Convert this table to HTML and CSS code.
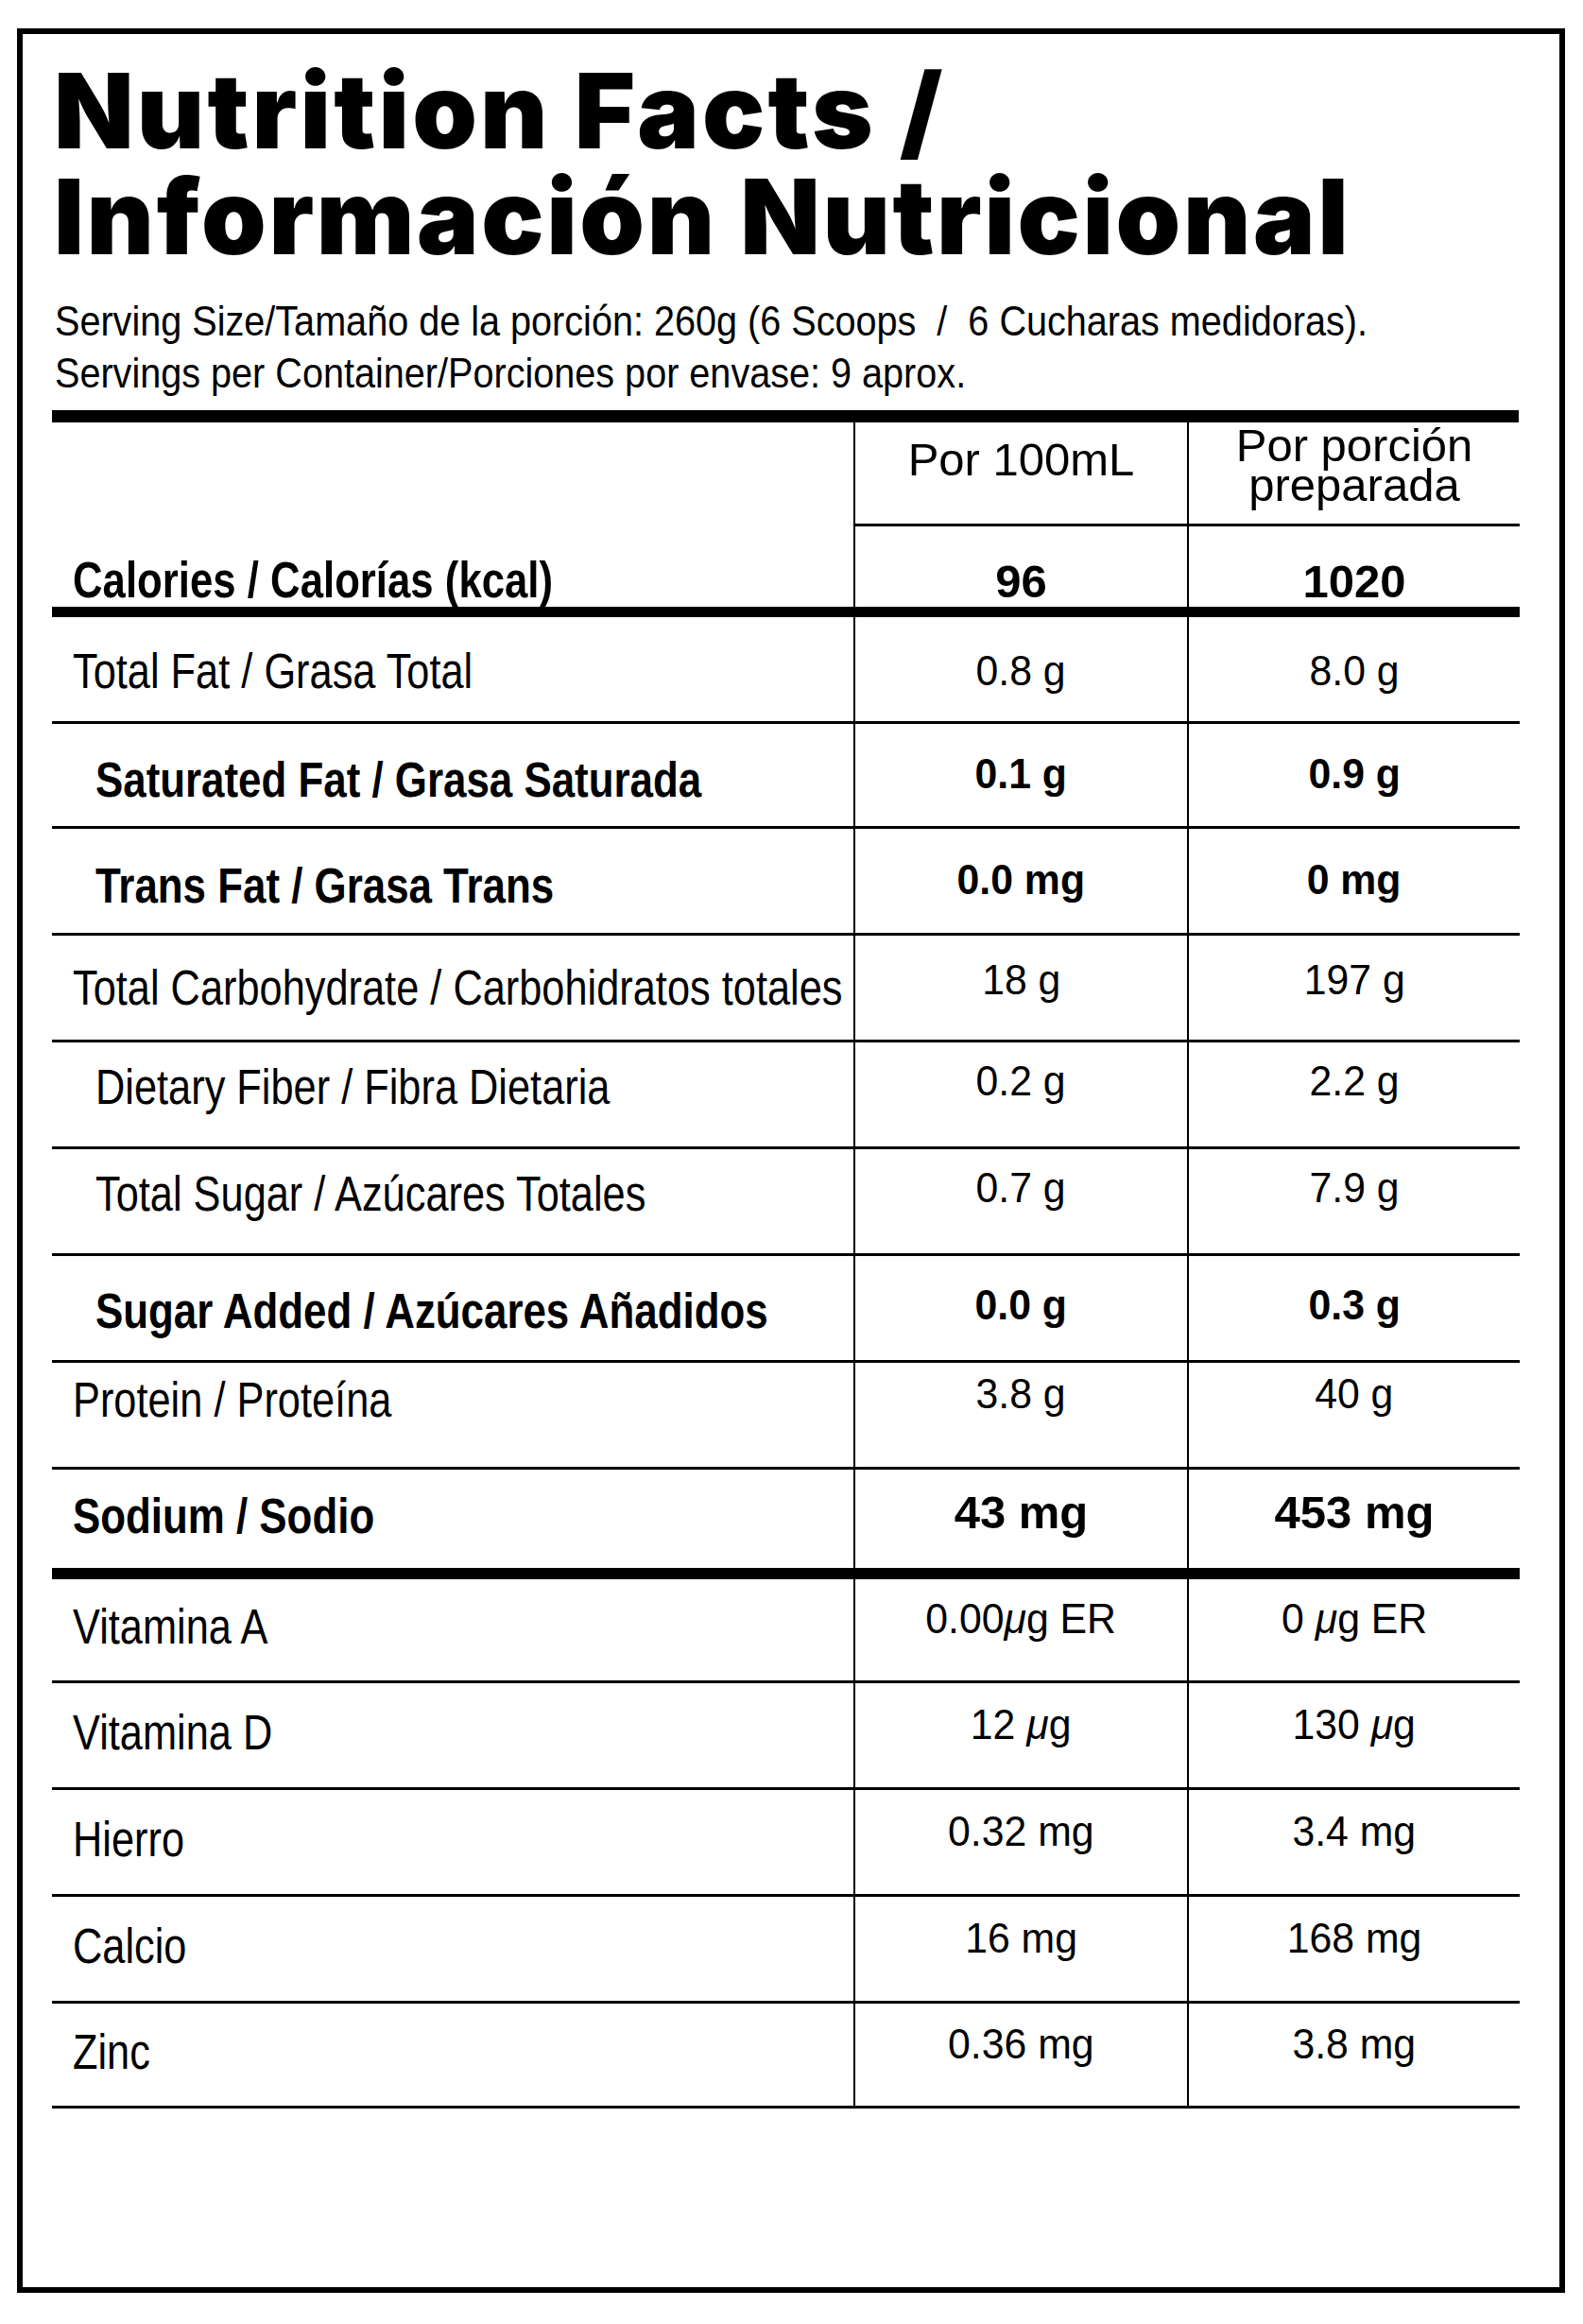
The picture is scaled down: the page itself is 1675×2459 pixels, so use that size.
FILE: index.html
```html
<!DOCTYPE html>
<html lang="es">
<head>
<meta charset="utf-8">
<title>Nutrition Facts / Información Nutricional</title>
<link rel="stylesheet" href="styles.css">
</head>
<body>
<div class="label">
  <h1 class="title"><span>Nutrition Facts /</span><span>Información Nutricional</span></h1>
  <div class="serving">
    <p>Serving Size/Tamaño de la porción: 260g (6 Scoops &nbsp;/ &nbsp;6 Cucharas medidoras).</p>
    <p>Servings per Container/Porciones por envase: 9 aprox.</p>
  </div>
  <div class="bar"></div>
  <div class="table">
    <div class="row head">
      <div class="cell"></div>
      <div class="cell v h1"><span class="hd">Por 100mL</span></div>
      <div class="cell v h2"><span class="hd two">Por porción<br>preparada</span></div>
    </div>
    <div class="row cal">
      <div class="cell"><span class="lbl b cl">Calories / Calorías (kcal)</span></div>
      <div class="cell v"><span class="val b cv">96</span></div>
      <div class="cell v"><span class="val b cv">1020</span></div>
    </div>
    <div class="row r-fat">
      <div class="cell"><span class="lbl">Total Fat / Grasa Total</span></div>
      <div class="cell v"><span class="val">0.8 g</span></div>
      <div class="cell v"><span class="val">8.0 g</span></div>
    </div>
    <div class="row short r-sat">
      <div class="cell ind"><span class="lbl b">Saturated Fat / Grasa Saturada</span></div>
      <div class="cell v"><span class="val b">0.1 g</span></div>
      <div class="cell v"><span class="val b">0.9 g</span></div>
    </div>
    <div class="row r-sat">
      <div class="cell ind"><span class="lbl b">Trans Fat / Grasa Trans</span></div>
      <div class="cell v"><span class="val b">0.0 mg</span></div>
      <div class="cell v"><span class="val b">0 mg</span></div>
    </div>
    <div class="row r-carb">
      <div class="cell"><span class="lbl">Total Carbohydrate / Carbohidratos totales</span></div>
      <div class="cell v"><span class="val">18 g</span></div>
      <div class="cell v"><span class="val">197 g</span></div>
    </div>
    <div class="row r-fib">
      <div class="cell ind"><span class="lbl">Dietary Fiber / Fibra Dietaria</span></div>
      <div class="cell v"><span class="val">0.2 g</span></div>
      <div class="cell v"><span class="val">2.2 g</span></div>
    </div>
    <div class="row r-fib">
      <div class="cell ind"><span class="lbl">Total Sugar / Azúcares Totales</span></div>
      <div class="cell v"><span class="val">0.7 g</span></div>
      <div class="cell v"><span class="val">7.9 g</span></div>
    </div>
    <div class="row r-add">
      <div class="cell ind"><span class="lbl b">Sugar Added / Azúcares Añadidos</span></div>
      <div class="cell v"><span class="val b">0.0 g</span></div>
      <div class="cell v"><span class="val b">0.3 g</span></div>
    </div>
    <div class="row r-prot">
      <div class="cell"><span class="lbl">Protein / Proteína</span></div>
      <div class="cell v"><span class="val">3.8 g</span></div>
      <div class="cell v"><span class="val">40 g</span></div>
    </div>
    <div class="row sod">
      <div class="cell"><span class="lbl b">Sodium / Sodio</span></div>
      <div class="cell v"><span class="val b cv">43 mg</span></div>
      <div class="cell v"><span class="val b cv">453 mg</span></div>
    </div>
    <div class="row vita r-vit">
      <div class="cell"><span class="lbl">Vitamina A</span></div>
      <div class="cell v"><span class="val">0.00<i class="mu">μ</i>g ER</span></div>
      <div class="cell v"><span class="val">0 <i class="mu">μ</i>g ER</span></div>
    </div>
    <div class="row r-vit">
      <div class="cell"><span class="lbl">Vitamina D</span></div>
      <div class="cell v"><span class="val">12 <i class="mu">μ</i>g</span></div>
      <div class="cell v"><span class="val">130 <i class="mu">μ</i>g</span></div>
    </div>
    <div class="row r-vit">
      <div class="cell"><span class="lbl">Hierro</span></div>
      <div class="cell v"><span class="val">0.32 mg</span></div>
      <div class="cell v"><span class="val">3.4 mg</span></div>
    </div>
    <div class="row r-vit">
      <div class="cell"><span class="lbl">Calcio</span></div>
      <div class="cell v"><span class="val">16 mg</span></div>
      <div class="cell v"><span class="val">168 mg</span></div>
    </div>
    <div class="row short r-vit">
      <div class="cell"><span class="lbl">Zinc</span></div>
      <div class="cell v"><span class="val">0.36 mg</span></div>
      <div class="cell v"><span class="val">3.8 mg</span></div>
    </div>
  </div>
</div>
</body>
</html>
```
FILE: styles.css
```css
* { box-sizing: border-box; margin: 0; padding: 0; }

body {
  background: #fff;
  color: #000;
  padding: 30px 0 0 18px;
  font-family: "Liberation Sans", Arial, sans-serif;
}

.label {
  width: 1638px;
  height: 2396px;
  border: 6px solid #000;
}

.title {
  font-family: Inter, "Liberation Sans", sans-serif;
  font-weight: 900;
  font-size: 110px;
  line-height: 112px;
  letter-spacing: 2.6px;
  padding: 25px 0 0 33px;
}
.title span { display: block; white-space: nowrap; }
.title span:first-child { letter-spacing: 3.2px; }

.serving {
  margin-top: 27px;
  padding-left: 34px;
  font-size: 44px;
  line-height: 55px;
}
.serving p {
  white-space: nowrap;
  transform: scaleX(0.9);
  transform-origin: left center;
}

.bar {
  margin: 12px 0 0 31px;
  width: 1552px;
  height: 13px;
  background: #000;
}

.table {
  margin-left: 31px;
  width: 1553px;
}

.row {
  display: grid;
  grid-template-columns: 848px 353px 352px;
  height: 113px;
  border-bottom: 3px solid #000;
}
.row.short { height: 111px; }
.row.head { height: 110px; border-bottom: 0; }
.row.cal { height: 96px; border-bottom-width: 11px; }
.row.sod { height: 116px; border-bottom-width: 12px; }
.row.vita { height: 110px; }

.cell {
  display: flex;
  align-items: center;
  padding: 0 0 6px 22px;
}
.cell.ind { padding-left: 46px; }
.cell.v {
  border-left: 2px solid #000;
  justify-content: center;
  padding: 0 0 14px 0;
}

/* per-row vertical nudges (label cell / value cells) */
.r-fat .cell { padding-top: 4px; padding-bottom: 0; }
.r-fat .cell.v { padding-top: 2px; padding-bottom: 0; }
.r-sat .cell { padding-top: 10px; padding-bottom: 0; }
.r-sat .cell.v { padding-top: 0; padding-bottom: 4px; }
.r-carb .cell { padding-bottom: 0; }
.r-carb .cell.v { padding-bottom: 18px; }
.r-fib .cell { padding-bottom: 16px; }
.r-fib .cell.v { padding-bottom: 30px; }
.r-add .cell { padding-top: 6px; padding-bottom: 0; }
.r-add .cell.v { padding-top: 0; padding-bottom: 8px; }
.r-prot .cell { padding-bottom: 31px; }
.r-prot .cell.v { padding-bottom: 46px; }
.r-vit .cell.v { padding-bottom: 24px; }

.row.head .cell.v {
  border-bottom: 3px solid #000;
  align-items: flex-start;
  text-align: center;
}
.row.head .h1 { padding-top: 11px; }
.row.head .h2 { padding-top: 3px; }

.hd {
  font-size: 49px;
  line-height: 56px;
  white-space: nowrap;
}
.hd.two { line-height: 42px; }

.row.cal .cell { align-items: flex-end; padding-bottom: 2px; }

.lbl {
  display: inline-block;
  font-size: 51px;
  line-height: 1;
  white-space: nowrap;
  transform: scaleX(0.85);
  transform-origin: left center;
}
.lbl.b { transform: scaleX(0.86); }
.lbl.cl { font-size: 54px; transform: scaleX(0.81); }

.val {
  display: inline-block;
  font-size: 45px;
  line-height: 1;
  white-space: nowrap;
  transform: scaleX(0.95);
  transform-origin: center center;
}
.val.cv { font-size: 49px; transform: none; }

.b { font-weight: 700; }

.mu { font-style: italic; }
```
